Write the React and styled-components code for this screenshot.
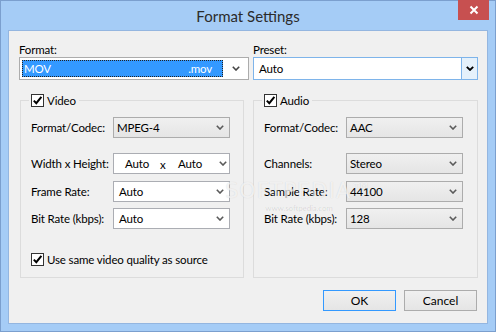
import styled, { createGlobalStyle } from "styled-components";

const GlobalStyle = createGlobalStyle`
  html, body {
    margin: 0;
    padding: 0;
    background: #ffffff;
  }
  body {
    font-family: Lato, "Noto Sans", "Liberation Sans", sans-serif;
    font-size: 11.5px;
    letter-spacing: -0.15px;
    color: #000;
  }
  * {
    box-sizing: border-box;
  }
`;

const Window = styled.div`
  position: relative;
  width: 496px;
  height: 332px;
  border: 1px solid #7b9fce;
  background: #a5ccf6;
  display: flex;
  flex-direction: column;
`;

const TitleBar = styled.div`
  height: 29px;
  display: grid;
  grid-template-columns: 1fr auto 1fr;
  align-items: start;
`;

const Title = styled.div`
  grid-column: 2;
  align-self: center;
  font-size: 15px;
  letter-spacing: 0;
  color: #2b2b2b;
  padding-top: 1px;
`;

const CloseButton = styled.div`
  grid-column: 3;
  justify-self: end;
  width: 31px;
  height: 20px;
  margin-top: -1px;
  margin-right: 6px;
  background: #c75050;
  display: flex;
  align-items: center;
  justify-content: center;
`;

const Client = styled.div`
  flex: 1;
  margin: 0 7px 7px;
  background: #f0f0f0;
  border: 1px solid #94b6e0;
  padding: 10px 9px 0 10px;
  display: flex;
  flex-direction: column;
`;

const TopRow = styled.div`
  display: grid;
  grid-template-columns: 230px 225px;
  column-gap: 4px;
`;

const Field = styled.div`
  display: flex;
  flex-direction: column;
`;

const FieldLabel = styled.div`
  line-height: 16px;
  height: 16px;
  padding-top: 1px;
  color: #000;
`;

const FocusSelect = styled.div`
  height: 23px;
  border: 1px solid #acacac;
  background: #fff;
  padding: 2px 0 2px 2px;
  display: flex;
`;

const Highlight = styled.div`
  flex: 1;
  background: #3399ff;
  border: 1px dotted #222;
  color: #fff;
  display: flex;
  align-items: center;
  justify-content: space-between;
  padding: 0 10px 0 1px;
`;

const ArrowSlot = styled.div`
  width: ${(p) => p.$w || 25}px;
  display: flex;
  align-items: center;
  justify-content: center;
  background: ${(p) => p.$bg || "transparent"};
  border-left: ${(p) => (p.$line ? `1px solid ${p.$line}` : "none")};
`;

const PresetSelect = styled.div`
  height: 23px;
  border: 1px solid #7eb4ea;
  background: #fff;
  display: flex;
`;

const PresetValue = styled.div`
  flex: 1;
  display: flex;
  align-items: center;
  padding-left: 5px;
`;

const GroupsRow = styled.div`
  display: grid;
  grid-template-columns: 224px 225px;
  column-gap: 9px;
  margin: 13px 0 0 1px;
`;

const Group = styled.fieldset`
  margin: 0;
  min-width: 0;
  border: 1px solid #dcdcdc;
  padding: 0 12px 10px 10px;
`;

const Legend = styled.legend`
  display: flex;
  align-items: center;
  gap: 3px;
  margin-left: -2px;
  padding: 0 3px 0 2px;
  line-height: 15px;
`;

const CheckBox = styled.span`
  width: 13px;
  height: 13px;
  border: 1px solid #333;
  background: #fff;
  display: inline-flex;
  align-items: center;
  justify-content: center;
  flex: none;
`;

const Row = styled.div`
  display: grid;
  grid-template-columns: 82px 117px;
  align-items: center;
  margin-top: ${(p) => p.$top}px;
`;

const RowLabel = styled.div`
  white-space: nowrap;
`;

const Combo = styled.div`
  height: 21px;
  border: 1px solid ${(p) => (p.$editable ? "#abadb3" : "#acacac")};
  background: ${(p) =>
    p.$editable ? "#ffffff" : "linear-gradient(#f0f0f0, #e5e5e5)"};
  display: flex;
  align-items: center;
  padding-left: ${(p) => (p.$editable ? 5 : 3)}px;
`;

const ComboText = styled.div`
  flex: 1;
  white-space: nowrap;
`;

const SizeText = styled.div`
  flex: 1;
  display: flex;
  align-items: center;
  padding-left: 6px;
`;

const SizePart = styled.span`
  width: ${(p) => p.$w}px;
  padding-top: ${(p) => (p.$low ? 2 : 0)}px;
`;

const ComboArrow = styled.div`
  width: 16px;
  display: flex;
  justify-content: center;
  padding-right: 2px;
`;

const CheckRow = styled.label`
  display: flex;
  align-items: center;
  gap: 3px;
  margin-top: ${(p) => p.$top}px;
  line-height: 15px;
  white-space: nowrap;
`;

const ButtonRow = styled.div`
  display: flex;
  justify-content: flex-end;
  gap: 8px;
  margin-top: 12px;
  padding-right: 1px;
`;

const Button = styled.button`
  width: 73px;
  height: 21px;
  padding: 0;
  font-family: inherit;
  font-size: 12px;
  color: #000;
  border: 1px solid ${(p) => (p.$default ? "#3399ff" : "#acacac")};
  background: linear-gradient(#f0f0f0, #e5e5e5);
`;

const Watermark = styled.div`
  position: absolute;
  left: 224px;
  top: 178px;
  pointer-events: none;
  display: flex;
  flex-direction: column;
  align-items: center;
`;

const WatermarkBig = styled.div`
  font-family: "DejaVu Sans", sans-serif;
  font-size: 21px;
  letter-spacing: 1px;
  color: rgba(255, 255, 255, 0.7);
  text-shadow: 0 0 1px rgba(0, 0, 0, 0.14);
  line-height: 24px;
`;

const WatermarkSmall = styled.div`
  font-size: 8px;
  color: rgba(0, 0, 0, 0.1);
  line-height: 10px;
`;

function Chevron({ color = "#5a5a5a", weight = 1.6 }) {
  return (
    <svg width="8" height="5" viewBox="0 0 8 5">
      <path
        d="M0.8 0.8 L4 4 L7.2 0.8"
        fill="none"
        stroke={color}
        strokeWidth={weight}
      />
    </svg>
  );
}

function Check() {
  return (
    <CheckBox>
      <svg width="11" height="11" viewBox="0 0 11 11">
        <path
          d="M1.8 5.6 L4.3 8.2 L9.4 1.8"
          fill="none"
          stroke="#000"
          strokeWidth="2"
        />
      </svg>
    </CheckBox>
  );
}

function Select({ value, editable }) {
  return (
    <Combo $editable={editable}>
      <ComboText>{value}</ComboText>
      <ComboArrow>
        <Chevron />
      </ComboArrow>
    </Combo>
  );
}

function SettingRow({ label, top, children }) {
  return (
    <Row $top={top}>
      <RowLabel>{label}</RowLabel>
      {children}
    </Row>
  );
}

export default function App() {
  return (
    <>
      <GlobalStyle />
      <Window>
        <TitleBar>
          <Title>Format Settings</Title>
          <CloseButton>
            <svg width="10" height="10" viewBox="0 0 10 10">
              <path
                d="M1.5 1.5 L8.5 8.5 M8.5 1.5 L1.5 8.5"
                stroke="#fff"
                strokeWidth="2"
              />
            </svg>
          </CloseButton>
        </TitleBar>

        <Client>
          <TopRow>
            <Field>
              <FieldLabel>Format:</FieldLabel>
              <FocusSelect>
                <Highlight>
                  <span>MOV</span>
                  <span>.mov</span>
                </Highlight>
                <ArrowSlot>
                  <Chevron color="#444" />
                </ArrowSlot>
              </FocusSelect>
            </Field>
            <Field>
              <FieldLabel>Preset:</FieldLabel>
              <PresetSelect>
                <PresetValue>Auto</PresetValue>
                <ArrowSlot $w={16} $bg="#e5f1fb" $line="#7eb4ea">
                  <Chevron color="#000" weight={1.8} />
                </ArrowSlot>
              </PresetSelect>
            </Field>
          </TopRow>

          <GroupsRow>
            <Group>
              <Legend>
                <Check />
                Video
              </Legend>
              <SettingRow label="Format/Codec:" top={9}>
                <Select value="MPEG-4" />
              </SettingRow>
              <SettingRow label="Width x Height:" top={15}>
                <Combo $editable>
                  <SizeText>
                    <SizePart $w={35}>Auto</SizePart>
                    <SizePart $w={18} $low>
                      x
                    </SizePart>
                    <SizePart $w={40}>Auto</SizePart>
                  </SizeText>
                  <ComboArrow>
                    <Chevron />
                  </ComboArrow>
                </Combo>
              </SettingRow>
              <SettingRow label="Frame Rate:" top={7}>
                <Select value="Auto" editable />
              </SettingRow>
              <SettingRow label="Bit Rate (kbps):" top={6}>
                <Select value="Auto" editable />
              </SettingRow>
              <CheckRow $top={23}>
                <Check />
                Use same video quality as source
              </CheckRow>
            </Group>

            <Group>
              <Legend>
                <Check />
                Audio
              </Legend>
              <SettingRow label="Format/Codec:" top={9}>
                <Select value="AAC" />
              </SettingRow>
              <SettingRow label="Channels:" top={15}>
                <Select value="Stereo" />
              </SettingRow>
              <SettingRow label="Sample Rate:" top={7}>
                <Select value="44100" />
              </SettingRow>
              <SettingRow label="Bit Rate (kbps):" top={6}>
                <Select value="128" />
              </SettingRow>
            </Group>
          </GroupsRow>

          <ButtonRow>
            <Button $default>OK</Button>
            <Button>Cancel</Button>
          </ButtonRow>
        </Client>

        <Watermark>
          <WatermarkBig>SOFTPEDIA™</WatermarkBig>
          <WatermarkSmall>www.softpedia.com</WatermarkSmall>
        </Watermark>
      </Window>
    </>
  );
}
